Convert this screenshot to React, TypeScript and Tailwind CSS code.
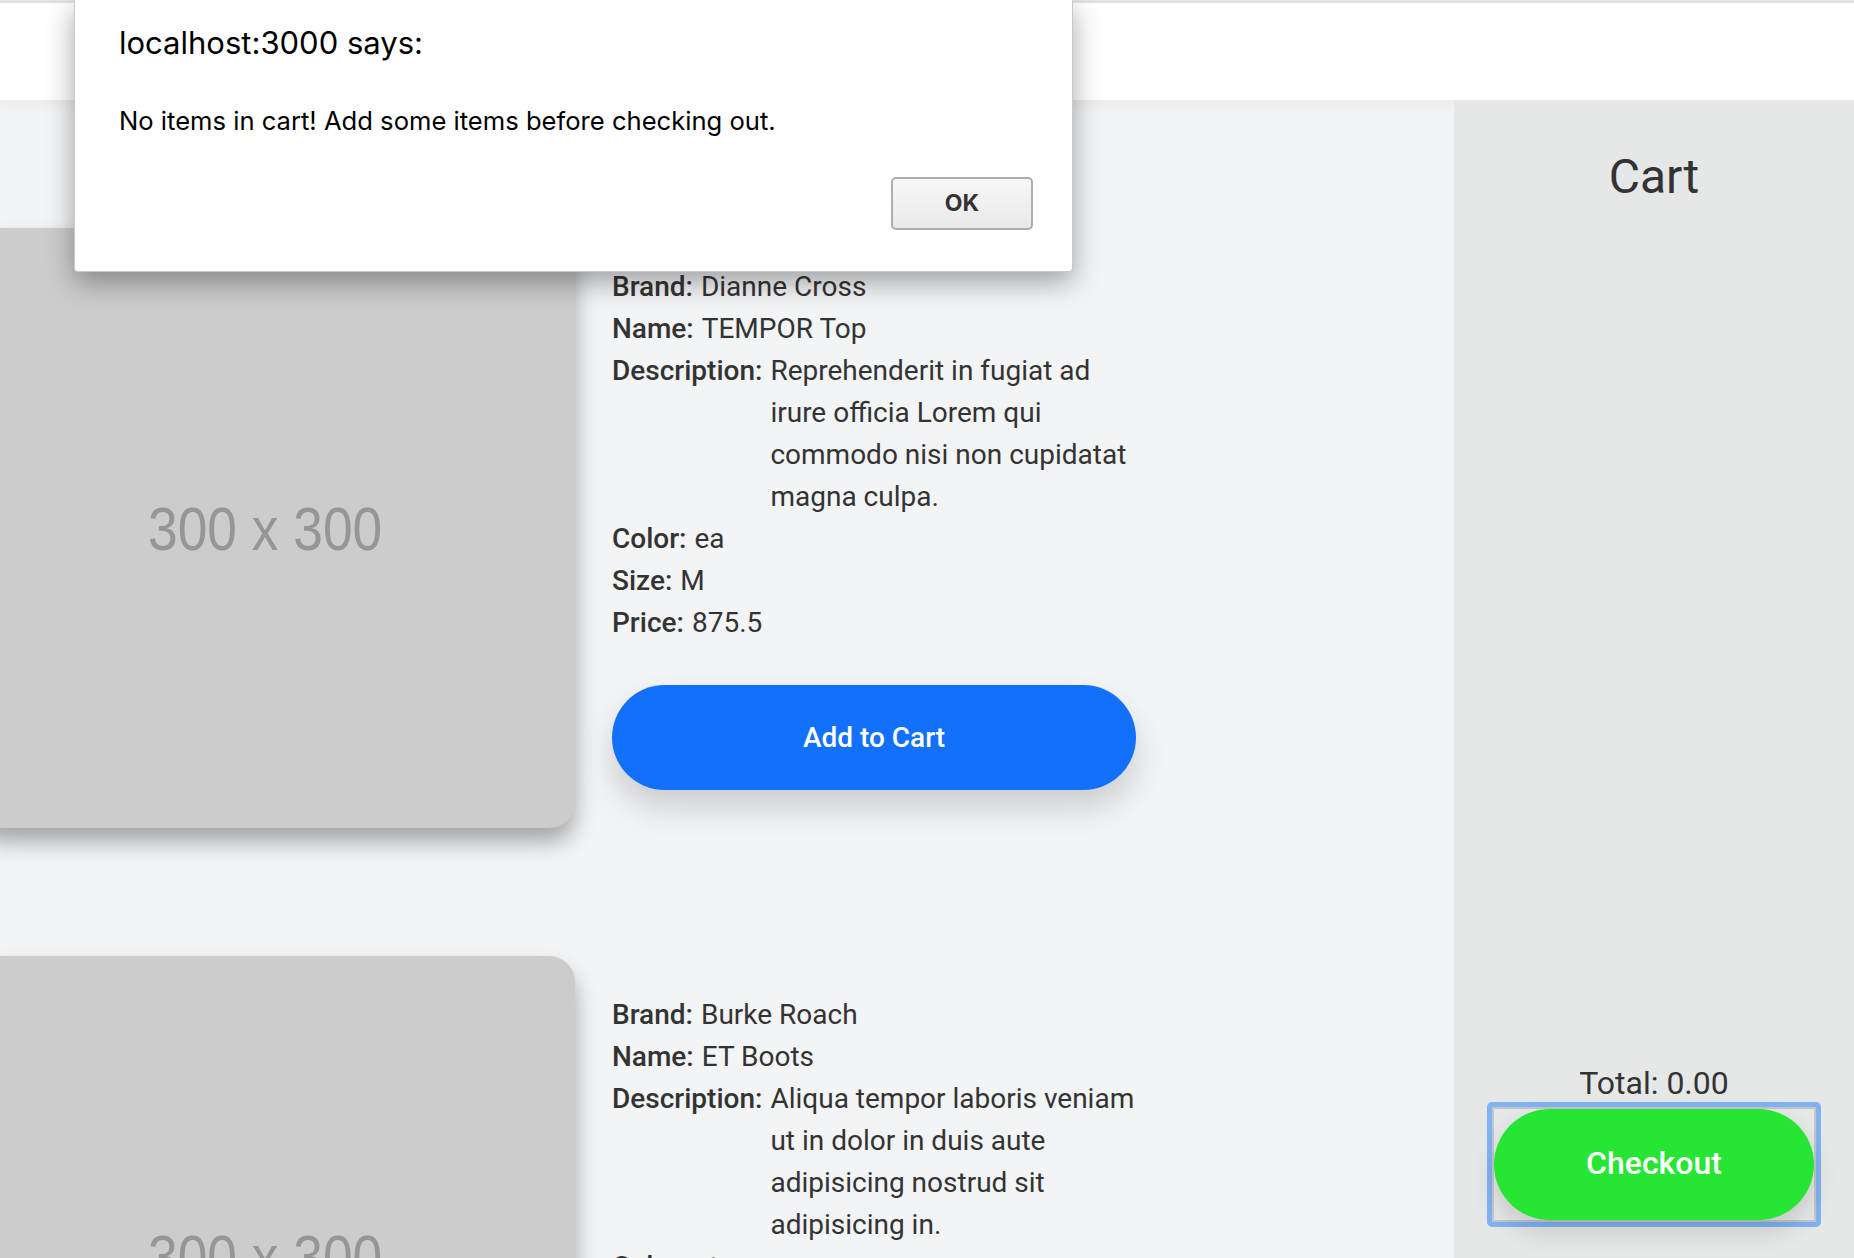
import React from 'react';

interface Product {
  brand: string;
  name: string;
  description: string[];
  color: string;
  size: string;
  price: string;
}

const products: Product[] = [
  {
    brand: 'Dianne Cross',
    name: 'TEMPOR Top',
    description: ['Reprehenderit in fugiat ad', 'irure officia Lorem qui', 'commodo nisi non cupidatat', 'magna culpa.'],
    color: 'ea',
    size: 'M',
    price: '875.5',
  },
  {
    brand: 'Burke Roach',
    name: 'ET Boots',
    description: ['Aliqua tempor laboris veniam', 'ut in dolor in duis aute', 'adipisicing nostrud sit', 'adipisicing in.'],
    color: 'et',
    size: 'L',
    price: '412.25',
  },
];

const Row: React.FC<{ label: string; children: React.ReactNode }> = ({ label, children }) => (
  <div className="flex gap-[8px]">
    <span className="shrink-0 font-medium">{label}:</span>
    <span className="flex-1">{children}</span>
  </div>
);

const ProductCard: React.FC<{ product: Product }> = ({ product }) => (
  <div className="flex items-center gap-[37px]">
    {/* placeholder image */}
    <div className="-ml-[25px] flex h-[600px] w-[600px] shrink-0 items-center justify-center rounded-[26px] bg-[#cccccc] pr-[20px] shadow-[0_14px_22px_rgba(0,0,0,0.32)]">
      <span className="scale-x-[0.86] font-['Liberation_Sans',sans-serif] text-[62px] text-[#969696]">300 x 300</span>
    </div>
    <div className="flex w-[560px] flex-col text-[28px] leading-[42px] text-[#333]">
      <Row label="Brand">{product.brand}</Row>
      <Row label="Name">{product.name}</Row>
      <Row label="Description">
        {product.description.map((line) => (
          <span key={line} className="block whitespace-nowrap">
            {line}
          </span>
        ))}
      </Row>
      <Row label="Color">{product.color}</Row>
      <Row label="Size">{product.size}</Row>
      <Row label="Price">{product.price}</Row>
      <button className="mt-[41px] h-[105px] w-[524px] rounded-full bg-[#1370fa] text-[28px] font-medium text-white shadow-[0_18px_32px_rgba(0,0,0,0.16)]">
        Add to Cart
      </button>
    </div>
  </div>
);

const AlertDialog: React.FC = () => (
  <div className="absolute left-[74px] top-0 z-30 flex h-[272px] w-[999px] flex-col rounded-b-[4px] border border-t-0 border-[#c9c9c9] bg-white px-[44px] pt-[24px] font-['Inter',sans-serif] text-black shadow-[0_10px_28px_rgba(0,0,0,0.35)]">
    <h1 className="text-[31px] leading-[38px]">localhost:3000 says:</h1>
    <p className="mt-[44px] text-[25.6px] leading-[30px]">No items in cart! Add some items before checking out.</p>
    <div className="mt-[41px] flex justify-end">
      <button className="-mr-[5px] h-[53px] w-[142px] rounded-[5px] border-2 border-[#adadad] bg-gradient-to-b from-[#f7f7f7] to-[#e9e9e9] text-[23px] font-bold text-[#333]">
        OK
      </button>
    </div>
  </div>
);

export default function App() {
  return (
    <div className="relative h-[1258px] w-full overflow-hidden bg-[#f3f4f6] font-['Roboto',sans-serif]">
      <header className="relative z-10 h-[100px] border-t-[3px] border-[#e2e2e2] bg-white shadow-[0_4px_14px_rgba(0,0,0,0.05)]" />
      <div className="flex">
        <main className="flex flex-1 flex-col gap-[128px] pt-[128px]">
          {products.map((p) => (
            <ProductCard key={p.name} product={p} />
          ))}
        </main>
        <aside className="relative z-20 flex h-[1158px] w-[400px] shrink-0 flex-col items-center bg-[#e6e8e8] pb-[31px] pt-[49px] text-[#333]">
          <h2 className="text-[48px] leading-[56px]">Cart</h2>
          <div className="mt-auto flex flex-col items-center">
            <p className="text-[32px] leading-[38px]">Total: 0.00</p>
            <div className="rounded-[5px] border-[5px] border-[#80b3f2]">
              <div className="border-2 border-[#c4c7ca]">
                <button className="h-[111px] w-[320px] rounded-full bg-[#26e633] pb-[3px] text-[32px] font-medium text-white shadow-[0_12px_26px_rgba(0,0,0,0.14)]">
                  Checkout
                </button>
              </div>
            </div>
          </div>
        </aside>
      </div>
      <AlertDialog />
    </div>
  );
}
